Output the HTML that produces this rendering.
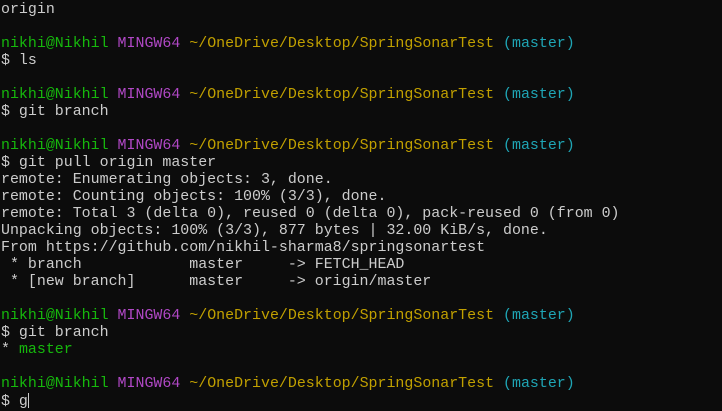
<!DOCTYPE html>
<html><head><style>
html,body{margin:0;padding:0;background:#0c0c0c;width:722px;height:410px;overflow:hidden}
pre{margin:0;position:absolute;left:1px;top:1.5px;font-family:"Liberation Mono",monospace;font-size:14.95px;line-height:17px;color:#cccccc;white-space:pre}
.g{color:#16b80c}.m{color:#b148c6}.y{color:#c1a000}.c{color:#1fa5b5}
.cur{display:inline-block;width:1px;height:15px;background:#ccc;vertical-align:-3px}
</style></head><body><pre>origin

<span class="g">nikhi@Nikhil</span> <span class="m">MINGW64</span> <span class="y">~/OneDrive/Desktop/SpringSonarTest</span> <span class="c">(master)</span>
$ ls

<span class="g">nikhi@Nikhil</span> <span class="m">MINGW64</span> <span class="y">~/OneDrive/Desktop/SpringSonarTest</span> <span class="c">(master)</span>
$ git branch

<span class="g">nikhi@Nikhil</span> <span class="m">MINGW64</span> <span class="y">~/OneDrive/Desktop/SpringSonarTest</span> <span class="c">(master)</span>
$ git pull origin master
remote: Enumerating objects: 3, done.
remote: Counting objects: 100% (3/3), done.
remote: Total 3 (delta 0), reused 0 (delta 0), pack-reused 0 (from 0)
Unpacking objects: 100% (3/3), 877 bytes | 32.00 KiB/s, done.
From https://github.com/nikhil-sharma8/springsonartest
 * branch            master     -&gt; FETCH_HEAD
 * [new branch]      master     -&gt; origin/master

<span class="g">nikhi@Nikhil</span> <span class="m">MINGW64</span> <span class="y">~/OneDrive/Desktop/SpringSonarTest</span> <span class="c">(master)</span>
$ git branch
* <span class="g">master</span>

<span class="g">nikhi@Nikhil</span> <span class="m">MINGW64</span> <span class="y">~/OneDrive/Desktop/SpringSonarTest</span> <span class="c">(master)</span>
$ g<span class="cur"></span></pre></body></html>
